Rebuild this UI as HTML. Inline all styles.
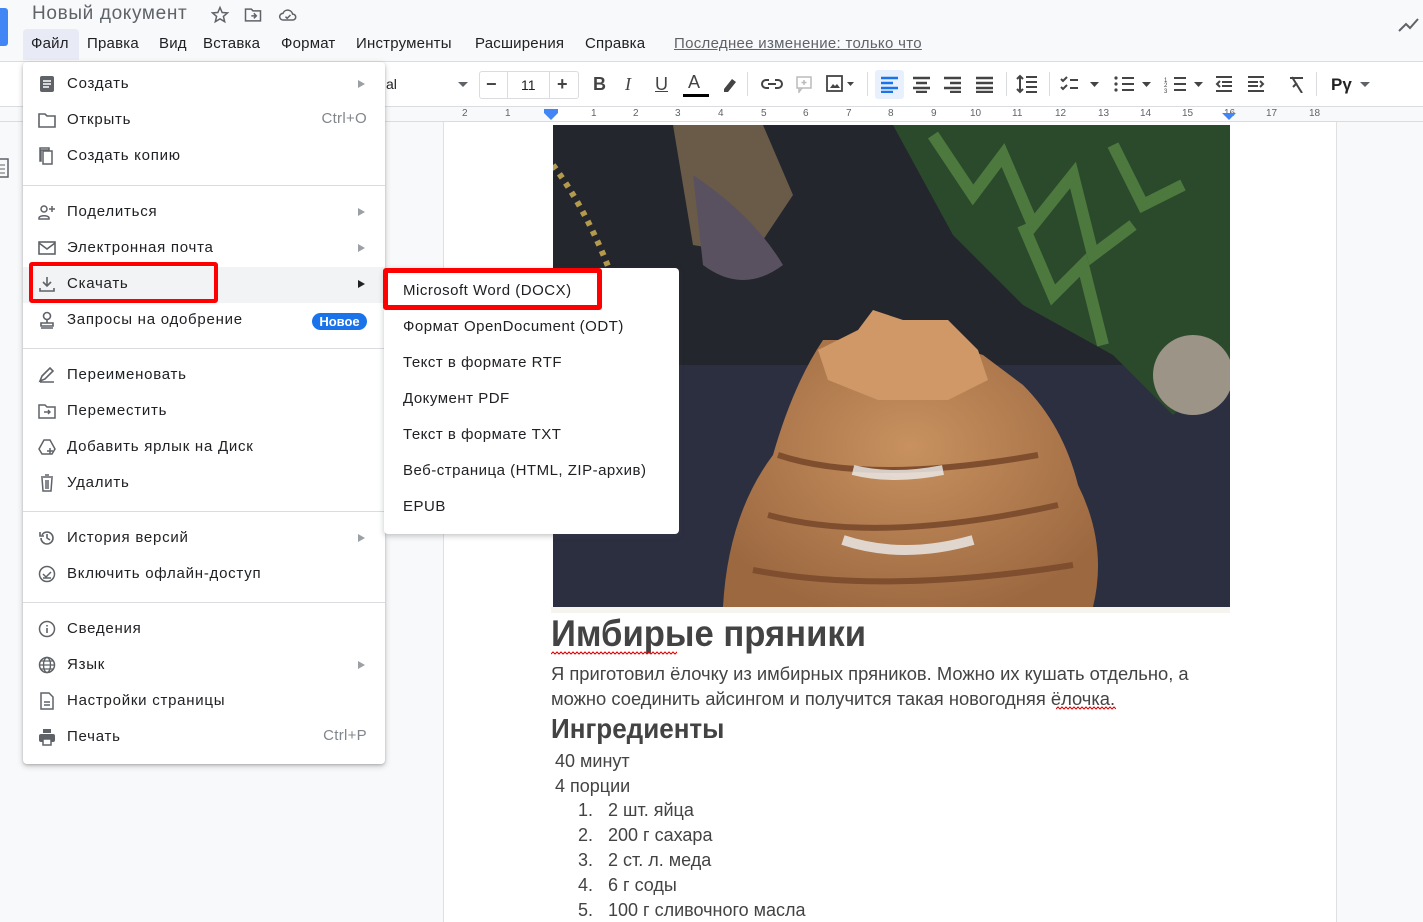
<!DOCTYPE html>
<html><head><meta charset="utf-8">
<style>
*{box-sizing:border-box;margin:0;padding:0}
body{width:1423px;height:922px;overflow:hidden;background:#f8f9fa;font-family:"Liberation Sans",sans-serif;color:#202124;position:relative}
.a{position:absolute;white-space:nowrap}
.title{left:32px;top:3px;font-size:19px;color:#5f6368;letter-spacing:0.65px}
.mb{top:35px;font-size:15px;color:#202124;letter-spacing:0.2px}
.ico{position:absolute;fill:#5f6368}
.menu{position:absolute;left:23px;top:62px;width:362px;height:702px;background:#fff;border-radius:4px;box-shadow:0 2px 6px rgba(60,64,67,.3),0 1px 2px rgba(60,64,67,.2)}
.sub{position:absolute;left:384px;top:268px;width:295px;height:266px;background:#fff;border-radius:4px;box-shadow:0 2px 6px rgba(60,64,67,.3)}
.mi{position:absolute;left:44px;font-size:15px;color:#202124;line-height:20px;white-space:nowrap;letter-spacing:0.75px}
.sh{position:absolute;right:18px;font-size:15px;color:#80868b;letter-spacing:0.3px}
.arr{position:absolute;left:335px;width:0;height:0;border-left:7px solid #9aa0a6;border-top:4px solid transparent;border-bottom:4px solid transparent}
.sep{position:absolute;left:0;width:362px;height:1px;background:#dadce0}
.si{position:absolute;left:19px;font-size:15px;color:#202124;white-space:nowrap;letter-spacing:0.5px}
.mic{position:absolute;left:15px;width:18px;height:18px}
.doc{position:absolute;left:443px;top:122px;width:894px;height:800px;background:#fff;border-left:1px solid #e0e0e0;border-right:1px solid #e0e0e0}
.dt{position:absolute;color:#434343;white-space:nowrap;transform-origin:0 0}
.bt{font-size:18px;transform:scaleX(1.02)}
.lt{font-size:18px}
</style></head><body>
<div class="a" style="left:-8px;top:8px;width:16px;height:38px;background:#4285f4;border-radius:3px"></div>
<div class="a title">Новый документ</div>
<svg class="ico" style="left:210px;top:5px" width="20" height="20" viewBox="0 0 24 24"><path d="M12 3l2.6 6 6.4.5-4.9 4.2 1.5 6.3L12 16.6 6.4 20l1.5-6.3L3 9.5 9.4 9z" fill="none" stroke="#5f6368" stroke-width="1.8"/></svg>
<svg class="ico" style="left:243px;top:5px" width="20" height="20" viewBox="0 0 24 24"><path d="M3 5h7l2 2h9v12H3z" fill="none" stroke="#5f6368" stroke-width="1.8"/><path d="M10 13h6M13 10l3 3-3 3" fill="none" stroke="#5f6368" stroke-width="1.8"/></svg>
<svg class="ico" style="left:277px;top:5px" width="22" height="20" viewBox="0 0 24 24"><path d="M6 18a4 4 0 010-8 6 6 0 0111.5 1A3.5 3.5 0 0118 18z" fill="none" stroke="#5f6368" stroke-width="1.8"/><path d="M9 14l2 2 4-4" fill="none" stroke="#5f6368" stroke-width="1.8"/></svg>
<div class="a" style="left:23px;top:29px;width:56px;height:31px;background:#e8eaf6;border-radius:4px 4px 0 0"></div>
<div class="a mb" style="left:31px">Файл</div>
<div class="a mb" style="left:87px">Правка</div>
<div class="a mb" style="left:159px">Вид</div>
<div class="a mb" style="left:203px">Вставка</div>
<div class="a mb" style="left:281px">Формат</div>
<div class="a mb" style="left:356px">Инструменты</div>
<div class="a mb" style="left:475px">Расширения</div>
<div class="a mb" style="left:585px">Справка</div>
<div class="a mb" style="left:674px;color:#5f6368;text-decoration:underline;letter-spacing:0.3px">Последнее изменение: только что</div>
<svg class="a" style="left:1398px;top:16px" width="22" height="18" viewBox="0 0 22 18"><path d="M1 15l7-7 4 4 8-9" fill="none" stroke="#5f6368" stroke-width="2"/></svg>
<!-- toolbar -->
<div class="a" style="left:0;top:61px;width:1423px;height:46px;background:#fff;border-top:1px solid #dadce0;border-bottom:1px solid #dadce0"></div>
<div class="a" style="left:386px;top:76px;font-size:14px;color:#202124">al</div>
<div class="a" style="left:458px;top:82px;border-left:5px solid transparent;border-right:5px solid transparent;border-top:5px solid #5f6368"></div>
<div class="a" style="left:479px;top:71px;width:100px;height:28px;border:1px solid #dadce0;border-radius:3px"></div>
<div class="a" style="left:507px;top:71px;width:1px;height:28px;background:#dadce0"></div>
<div class="a" style="left:549px;top:71px;width:1px;height:28px;background:#dadce0"></div>
<div class="a" style="left:486px;top:74px;font-size:18px;color:#444;font-weight:bold">−</div>
<div class="a" style="left:521px;top:77px;font-size:14px;color:#202124">11</div>
<div class="a" style="left:557px;top:74px;font-size:18px;color:#444;font-weight:bold">+</div>
<div class="a" style="left:593px;top:74px;font-size:18px;font-weight:bold;color:#444">B</div>
<div class="a" style="left:625px;top:74px;font-size:18px;font-style:italic;font-family:'Liberation Serif';color:#444">I</div>
<div class="a" style="left:655px;top:74px;font-size:18px;text-decoration:underline;color:#444">U</div>
<div class="a" style="left:688px;top:72px;font-size:18px;color:#444">A</div>
<div class="a" style="left:683px;top:94px;width:26px;height:3px;background:#000"></div>
<svg class="a" style="left:720px;top:75px" width="20" height="18" viewBox="0 0 20 18"><path d="M4 14l8-10 4 3-8 10H4z" fill="#444"/></svg>
<div class="a" style="left:747px;top:72px;width:1px;height:24px;background:#dadce0"></div>
<svg class="a" style="left:761px;top:76px" width="22" height="16" viewBox="0 0 22 16"><path d="M8 4H5a4 4 0 000 8h3M14 4h3a4 4 0 010 8h-3M7 8h8" fill="none" stroke="#444" stroke-width="2"/></svg>
<svg class="a" style="left:795px;top:75px" width="18" height="18" viewBox="0 0 18 18"><rect x="2" y="2" width="14" height="11" fill="none" stroke="#bbb" stroke-width="1.5"/><path d="M9 5v5M6.5 7.5h5M4 13v4l3-4" fill="none" stroke="#bbb" stroke-width="1.5"/></svg>
<svg class="a" style="left:826px;top:75px" width="30" height="18" viewBox="0 0 30 18"><rect x="1" y="1" width="15" height="15" fill="none" stroke="#444" stroke-width="1.8"/><path d="M4 13l3-4 2 2 2-2 3 4z" fill="#444"/><path d="M21 7h7l-3.5 4z" fill="#444"/></svg>
<div class="a" style="left:867px;top:72px;width:1px;height:24px;background:#dadce0"></div>
<div class="a" style="left:875px;top:70px;width:29px;height:29px;background:#e8f0fe;border-radius:3px"></div>
<svg class="a" style="left:880px;top:75px" width="120" height="18" viewBox="0 0 120 18"><g stroke-width="2.4"><path d="M1 3h17M1 8h12M1 13h17M1 17h12" stroke="#1a73e8"/><path d="M33 3h17M36 8h11M33 13h17M36 17h11" stroke="#444"/><path d="M64 3h17M70 8h11M64 13h17M70 17h11" stroke="#444"/><path d="M96 3h17M96 8h17M96 13h17M96 17h17" stroke="#444"/></g></svg>
<div class="a" style="left:1006px;top:72px;width:1px;height:24px;background:#dadce0"></div>
<svg class="a" style="left:1016px;top:74px" width="22" height="20" viewBox="0 0 22 20"><path d="M4 2v16M1 5l3-3 3 3M1 15l3 3 3-3M10 3h11M10 8h11M10 13h11M10 18h11" fill="none" stroke="#444" stroke-width="2"/></svg>
<div class="a" style="left:1049px;top:72px;width:1px;height:24px;background:#dadce0"></div>
<svg class="a" style="left:1060px;top:75px" width="250" height="18" viewBox="0 0 250 18"><g fill="none" stroke="#444" stroke-width="2"><path d="M1 4l2 2 4-4M1 12l2 2 4-4M10 5h8M10 13h8"/><path d="M62 3h12M62 9h12M62 15h12"/><path d="M114 3h12M114 9h12M114 15h12"/><path d="M156 2h16M162 7h10M162 11h10M156 16h16M160 6l-3 3 3 3"/><path d="M188 2h16M188 7h10M188 11h10M188 16h16M200 6l3 3-3 3"/></g><g fill="#444"><path d="M30 7h9l-4.5 5z M82 7h9l-4.5 5z M134 7h9l-4.5 5z"/><circle cx="56" cy="3" r="1.6"/><circle cx="56" cy="9" r="1.6"/><circle cx="56" cy="15" r="1.6"/></g><text x="104" y="7" font-size="6" fill="#444">1</text><text x="104" y="12" font-size="6" fill="#444">2</text><text x="104" y="18" font-size="6" fill="#444">3</text><path d="M232 2l10 16M230 3h13M233 12l4-4" fill="none" stroke="#444" stroke-width="2"/></svg>
<div class="a" style="left:1316px;top:72px;width:1px;height:24px;background:#dadce0"></div>
<div class="a" style="left:1331px;top:75px;font-size:17px;font-weight:bold;color:#222">Pγ</div>
<div class="a" style="left:1360px;top:82px;border-left:5px solid transparent;border-right:5px solid transparent;border-top:5px solid #5f6368"></div>
<!-- ruler -->
<div class="a" style="left:0;top:107px;width:1423px;height:15px;background:#f8f9fa;border-bottom:1px solid #dadce0"></div>
<div class="a" style="left:553px;top:107px;width:677px;height:14px;background:#fff"></div>
<div class="a" style="left:443px;top:108px;font-size:10px;color:#5f6368">
<span style="position:absolute;left:19px">2</span><span style="position:absolute;left:62px">1</span>
<span style="position:absolute;left:148px">1</span><span style="position:absolute;left:190px">2</span><span style="position:absolute;left:232px">3</span><span style="position:absolute;left:275px">4</span><span style="position:absolute;left:318px">5</span><span style="position:absolute;left:360px">6</span><span style="position:absolute;left:403px">7</span><span style="position:absolute;left:445px">8</span><span style="position:absolute;left:488px">9</span><span style="position:absolute;left:527px">10</span><span style="position:absolute;left:569px">11</span><span style="position:absolute;left:612px">12</span><span style="position:absolute;left:655px">13</span><span style="position:absolute;left:697px">14</span><span style="position:absolute;left:739px">15</span><span style="position:absolute;left:781px">16</span><span style="position:absolute;left:823px">17</span><span style="position:absolute;left:866px">18</span></div>
<div class="a" style="left:544px;top:109px;width:14px;height:4px;background:#4285f4"></div>
<div class="a" style="left:544px;top:113px;border-left:7px solid transparent;border-right:7px solid transparent;border-top:7px solid #4285f4"></div>
<div class="a" style="left:1222px;top:113px;border-left:7px solid transparent;border-right:7px solid transparent;border-top:7px solid #4285f4"></div>
<svg class="a" style="left:0;top:158px" width="10" height="20" viewBox="0 0 10 20"><rect x="-6" y="1" width="14" height="18" fill="none" stroke="#5f6368" stroke-width="1.5"/><path d="M-3 7h8M-3 11h8M-3 15h8" stroke="#5f6368"/></svg>
<!-- document -->
<div class="doc"></div>
<svg class="a" style="left:553px;top:125px" width="677" height="482" viewBox="0 0 677 482">
<defs><radialGradient id="ck" cx="0.5" cy="0.45" r="0.6"><stop offset="0" stop-color="#c8915f"/><stop offset="1" stop-color="#9c6840"/></radialGradient></defs>
<rect width="677" height="482" fill="#23262d"/>
<rect x="0" y="240" width="677" height="242" fill="#2c2f40"/>
<path d="M340 0L677 0 677 240 620 290 560 230 470 180 400 110z" fill="#2b4a2c"/>
<path d="M380 10l40 60 30-40 30 70 40-50 20 80 40-30 M470 100l30 70 30-30 20 80 M560 20l30 60 40-20" fill="none" stroke="#5a8a46" stroke-width="12" opacity=".75"/>
<path d="M120 0l90 0 30 70-40 60-60-10z" fill="#6a5b48"/>
<path d="M140 50 Q200 90 230 140 Q190 170 150 140z" fill="#5a5160"/>
<path d="M0 40 Q60 120 90 260" fill="none" stroke="#b39a4c" stroke-width="6" stroke-dasharray="5 6"/>
<circle cx="640" cy="250" r="40" fill="#9d9488"/>
<path d="M170 482 Q175 390 220 330 Q240 260 270 215 L310 215 L335 190 L365 210 L430 230 L470 260 Q510 300 525 360 Q555 420 540 482z" fill="url(#ck)"/>
<path d="M265 225l40-20 15-20 30 10 45 0 30 30 10 30-40 20-70 0-50-20z" fill="#cf9866"/>
<path d="M225 330q90 30 260 0 M215 390q110 30 290 -10 M200 445q130 25 320 -5" stroke="#7e4e2e" stroke-width="6" fill="none"/>
<path d="M300 345q40 10 90 0 M290 415q60 20 130 0" stroke="#eee" stroke-width="10" fill="none" opacity=".8"/>
</svg>
<div class="a" style="left:551px;top:607px;width:679px;height:6px;background:#f6f4ef"></div>
<div class="dt" style="left:551px;top:613px;font-size:37px;font-weight:bold;transform:scaleX(0.936)">Имбирые пряники</div>
<svg class="a" style="left:551px;top:651px" width="126" height="4"><path d="M0 3 l2-2 2 2 2-2 2 2 2-2 2 2 2-2 2 2 2-2 2 2 2-2 2 2 2-2 2 2 2-2 2 2 2-2 2 2 2-2 2 2 2-2 2 2 2-2 2 2 2-2 2 2 2-2 2 2 2-2 2 2 2-2 2 2 2-2 2 2 2-2 2 2 2-2 2 2 2-2 2 2 2-2 2 2 2-2 2 2 2-2 2 2 2-2 2 2 2-2 2 2 2-2 2 2 2-2 2 2 2-2 2 2 2-2 2 2 2-2 2 2 2-2 2 2 2-2 2 2 2-2 2 2 2-2 2 2 2-2 2 2" fill="none" stroke="#d00" stroke-width="1"/></svg>
<div class="dt bt" style="left:551px;top:664px">Я приготовил ёлочку из имбирных пряников. Можно их кушать отдельно, а</div>
<div class="dt bt" style="left:551px;top:689px">можно соединить айсингом и получится такая новогодняя ёлочка.</div>
<svg class="a" style="left:1056px;top:706px" width="60" height="4"><path d="M0 3 l2-2 2 2 2-2 2 2 2-2 2 2 2-2 2 2 2-2 2 2 2-2 2 2 2-2 2 2 2-2 2 2 2-2 2 2 2-2 2 2 2-2 2 2 2-2 2 2 2-2 2 2 2-2 2 2 2-2 2 2" fill="none" stroke="#d00" stroke-width="1"/></svg>
<div class="dt" style="left:551px;top:713px;font-size:28px;font-weight:bold;transform:scaleX(0.93)">Ингредиенты</div>
<div class="dt lt" style="left:555px;top:751px">40 минут</div>
<div class="dt lt" style="left:555px;top:776px">4 порции</div>
<div class="dt lt" style="left:578px;top:800px">1.&nbsp;&nbsp;&nbsp;2 шт. яйца</div>
<div class="dt lt" style="left:578px;top:825px">2.&nbsp;&nbsp;&nbsp;200 г сахара</div>
<div class="dt lt" style="left:578px;top:850px">3.&nbsp;&nbsp;&nbsp;2 ст. л. меда</div>
<div class="dt lt" style="left:578px;top:875px">4.&nbsp;&nbsp;&nbsp;6 г соды</div>
<div class="dt lt" style="left:578px;top:900px">5.&nbsp;&nbsp;&nbsp;100 г сливочного масла</div>
<!-- file menu -->
<div class="menu">
<div class="a" style="left:0;top:205px;width:362px;height:36px;background:#f1f3f4"></div>
<svg class="mic" style="top:13px" viewBox="0 0 18 18"><rect x="2" y="1" width="14" height="16" rx="2" fill="#5f6368"/><path d="M5 6h8M5 9h8M5 12h6" stroke="#fff" stroke-width="1.4"/></svg>
<div class="mi" style="top:12px">Создать</div><div class="arr" style="top:18px"></div>
<svg class="mic" style="top:49px" viewBox="0 0 18 18"><path d="M1 3h6l2 2h8v11H1z" fill="none" stroke="#5f6368" stroke-width="1.6"/></svg>
<div class="mi" style="top:48px">Открыть</div><div class="sh" style="top:48px">Ctrl+O</div>
<svg class="mic" style="top:85px" viewBox="0 0 18 18"><path d="M5 4h9v13H5zM2 1h9v2H3v11H2z" fill="none" stroke="#5f6368" stroke-width="1.5"/></svg>
<div class="mi" style="top:84px">Создать копию</div>
<div class="sep" style="top:123px"></div>
<svg class="mic" style="top:141px" viewBox="0 0 18 18"><circle cx="6" cy="6" r="3" fill="none" stroke="#5f6368" stroke-width="1.5"/><path d="M1 15c0-3 10-3 10 0v1H1z" fill="none" stroke="#5f6368" stroke-width="1.5"/><path d="M14 3v6M11 6h6" stroke="#5f6368" stroke-width="1.5"/></svg>
<div class="mi" style="top:140px">Поделиться</div><div class="arr" style="top:146px"></div>
<svg class="mic" style="top:177px" viewBox="0 0 18 18"><rect x="1" y="3" width="16" height="12" fill="none" stroke="#5f6368" stroke-width="1.6"/><path d="M1 4l8 6 8-6" fill="none" stroke="#5f6368" stroke-width="1.6"/></svg>
<div class="mi" style="top:176px">Электронная почта</div><div class="arr" style="top:182px"></div>
<svg class="mic" style="top:213px" viewBox="0 0 18 18"><path d="M9 2v9M5 7l4 4 4-4M2 13v3h14v-3" fill="none" stroke="#5f6368" stroke-width="1.6"/></svg>
<div class="mi" style="top:212px">Скачать</div><div class="arr" style="top:218px;border-left-color:#202124"></div>
<svg class="mic" style="top:249px" viewBox="0 0 18 18"><circle cx="9" cy="5" r="3.5" fill="none" stroke="#5f6368" stroke-width="1.6"/><path d="M9 9v3M3 12h12v3H3zM3 17h12" fill="none" stroke="#5f6368" stroke-width="1.6"/></svg>
<div class="mi" style="top:248px">Запросы на одобрение</div>
<div class="a" style="left:289px;top:251px;width:55px;height:17px;background:#1a73e8;border-radius:9px;color:#fff;font-size:13px;font-weight:bold;text-align:center;line-height:17px">Новое</div>
<div class="sep" style="top:286px"></div>
<svg class="mic" style="top:304px" viewBox="0 0 18 18"><path d="M2 15l2-5 8-8 3 3-8 8zM2 16h14" fill="none" stroke="#5f6368" stroke-width="1.6"/></svg>
<div class="mi" style="top:303px">Переименовать</div>
<svg class="mic" style="top:340px" viewBox="0 0 18 18"><path d="M1 3h6l2 2h8v11H1z" fill="none" stroke="#5f6368" stroke-width="1.5"/><path d="M6 10h6M10 8l2 2-2 2" fill="none" stroke="#5f6368" stroke-width="1.4"/></svg>
<div class="mi" style="top:339px">Переместить</div>
<svg class="mic" style="top:376px" viewBox="0 0 18 18"><path d="M6 2h6l5 9-3 5H4l-3-5z" fill="none" stroke="#5f6368" stroke-width="1.5"/><path d="M12 10v6M9 13h6" stroke="#5f6368" stroke-width="1.5"/></svg>
<div class="mi" style="top:375px">Добавить ярлык на Диск</div>
<svg class="mic" style="top:412px" viewBox="0 0 18 18"><path d="M3 3h12M7 1h4M4 4l1 13h8l1-13M8 6v9M10 6v9" fill="none" stroke="#5f6368" stroke-width="1.5"/></svg>
<div class="mi" style="top:411px">Удалить</div>
<div class="sep" style="top:449px"></div>
<svg class="mic" style="top:467px" viewBox="0 0 18 18"><path d="M3 9a6 6 0 106-6 6 6 0 00-5 3M2 3v4h4M9 5v4l3 2" fill="none" stroke="#5f6368" stroke-width="1.6"/></svg>
<div class="mi" style="top:466px">История версий</div><div class="arr" style="top:472px"></div>
<svg class="mic" style="top:503px" viewBox="0 0 18 18"><circle cx="9" cy="9" r="7.5" fill="none" stroke="#5f6368" stroke-width="1.5"/><path d="M5 9l3 3 5-5M5 13h8" fill="none" stroke="#5f6368" stroke-width="1.5"/></svg>
<div class="mi" style="top:502px">Включить офлайн-доступ</div>
<div class="sep" style="top:540px"></div>
<svg class="mic" style="top:558px" viewBox="0 0 18 18"><circle cx="9" cy="9" r="7.5" fill="none" stroke="#5f6368" stroke-width="1.5"/><path d="M9 8v5M9 5v1.5" stroke="#5f6368" stroke-width="1.6"/></svg>
<div class="mi" style="top:557px">Сведения</div>
<svg class="mic" style="top:594px" viewBox="0 0 18 18"><circle cx="9" cy="9" r="7.5" fill="none" stroke="#5f6368" stroke-width="1.5"/><ellipse cx="9" cy="9" rx="3.5" ry="7.5" fill="none" stroke="#5f6368" stroke-width="1.4"/><path d="M1.5 9h15M3 5h12M3 13h12" stroke="#5f6368" stroke-width="1.3"/></svg>
<div class="mi" style="top:593px">Язык</div><div class="arr" style="top:599px"></div>
<svg class="mic" style="top:630px" viewBox="0 0 18 18"><path d="M3 1h8l4 4v12H3z" fill="none" stroke="#5f6368" stroke-width="1.5"/><path d="M6 10h6M6 13h6" stroke="#5f6368" stroke-width="1.4"/></svg>
<div class="mi" style="top:629px">Настройки страницы</div>
<svg class="mic" style="top:666px" viewBox="0 0 18 18"><path d="M5 1h8v4H5z" fill="#5f6368"/><rect x="1" y="6" width="16" height="8" rx="2" fill="#5f6368"/><path d="M5 11h8v6H5z" fill="#fff" stroke="#5f6368" stroke-width="1.5"/></svg>
<div class="mi" style="top:665px">Печать</div><div class="sh" style="top:665px">Ctrl+P</div>
</div>
<div class="a" style="left:29px;top:262px;width:189px;height:41px;border:4px solid #f00;border-radius:3px"></div>
<!-- submenu -->
<div class="sub">
<div class="si" style="top:14px">Microsoft Word (DOCX)</div>
<div class="si" style="top:50px">Формат OpenDocument (ODT)</div>
<div class="si" style="top:86px">Текст в формате RTF</div>
<div class="si" style="top:122px">Документ PDF</div>
<div class="si" style="top:158px">Текст в формате TXT</div>
<div class="si" style="top:194px">Веб-страница (HTML, ZIP-архив)</div>
<div class="si" style="top:230px">EPUB</div>
</div>
<div class="a" style="left:383px;top:268px;width:219px;height:42px;border:5px solid #f00;border-radius:3px"></div>
</body></html>
